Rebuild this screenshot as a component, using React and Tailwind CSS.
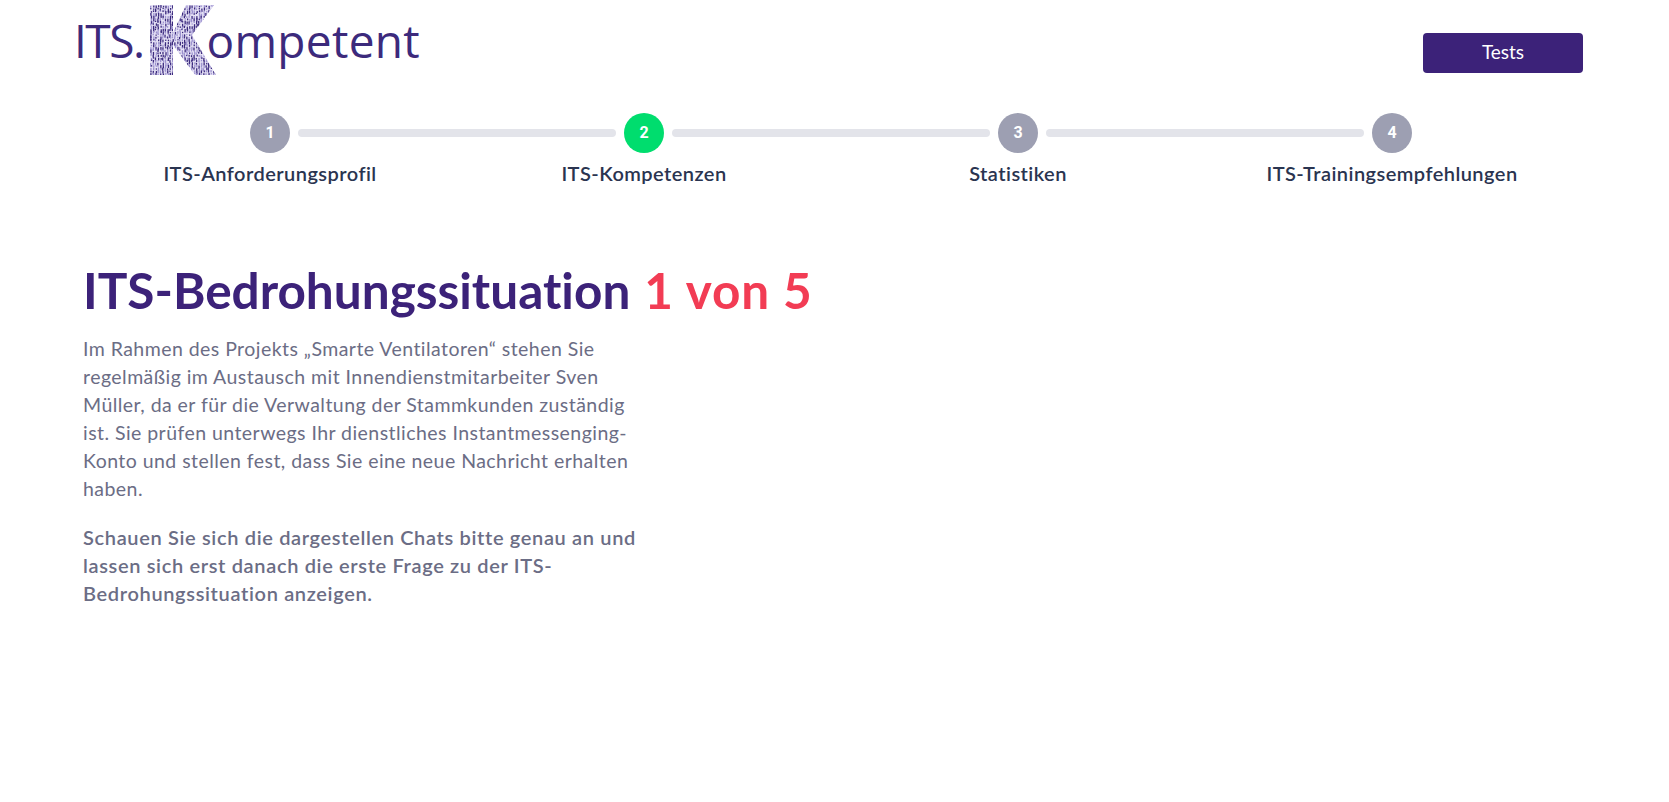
const STEPS = [
  { n: 1, label: "ITS-Anforderungsprofil" },
  { n: 2, label: "ITS-Kompetenzen", active: true },
  { n: 3, label: "Statistiken" },
  { n: 4, label: "ITS-Trainingsempfehlungen" },
];

// small dashes that make up the word-cloud K of the logo
const dots = [];
let seed = 7;
const rnd = () => {
  seed = (seed * 16807) % 2147483647;
  return seed / 2147483647;
};
for (let y = 0; y < 70; y += 2.6) {
  for (let x = 0; x < 68; x += 2.4) {
    dots.push({ x: x + rnd(), y: y + rnd(), h: 1.2 + rnd() * 2.4, dark: rnd() > 0.45 });
  }
}

function LogoK() {
  return (
    <svg width="66" height="70" viewBox="0 0 66 70" className="shrink-0">
      <defs>
        <clipPath id="k-shape">
          <path d="M0 0H23V28L36 0H64L42 30L66 70H45L23 40V70H0Z" />
        </clipPath>
      </defs>
      <g clipPath="url(#k-shape)">
        <rect width="66" height="70" fill="#e6e2f5" />
        {dots.map((d, i) => (
          <rect key={i} x={d.x} y={d.y} width="1.3" height={d.h} fill={d.dark ? "#3b2a7e" : "#9c92cf"} />
        ))}
      </g>
    </svg>
  );
}

function Logo() {
  return (
    <div className="flex items-start h-[70px] mt-[5px] ml-[74px] text-[#3c2a7c] text-[46px] leading-[70px] font-['Open_Sans',sans-serif]">
      <span className="tracking-[-1.5px] mr-[6px]">ITS.</span>
      <LogoK />
      <span className="-ml-[9px] tracking-[0.3px]">ompetent</span>
    </div>
  );
}

export default function App() {
  return (
    <div className="min-h-[802px] bg-white font-['Lato',sans-serif] [font-variant-ligatures:none]">
      {/* Header */}
      <div className="flex justify-between items-start pr-[86px]">
        <Logo />
        <button className="w-[160px] h-10 mt-[33px] pb-0.5 bg-[#3c2279] text-white text-[19px] rounded">Tests</button>
      </div>

      {/* Stepper */}
      <div className="flex items-center mt-[38px] ml-[250px] w-[1162px]">
        {STEPS.map((s) => (
          <div key={s.n} className="contents">
            <div className={`w-10 h-10 shrink-0 rounded-full flex items-center justify-center text-white text-base font-bold font-['Roboto',sans-serif] ${s.active ? "bg-[#00dd6e]" : "bg-[#9d9fb2]"}`}>
              {s.n}
            </div>
            {s.n < 4 && <div className="flex-1 h-2 mx-2 rounded-full bg-[#e3e4ea]" />}
          </div>
        ))}
      </div>
      <div className="grid grid-cols-4 w-[1496px] ml-[83px] mt-[6px]">
        {STEPS.map((s) => (
          <div key={s.n} className="text-center text-[20px] tracking-[0.45px] leading-7 font-semibold text-[#2a3450]">
            {s.label}
          </div>
        ))}
      </div>

      {/* Content */}
      <div className="ml-[83px] mt-[73px] w-[556px]">
        <h1 className="text-[49.5px] leading-[60px] font-bold text-[#3c2279] whitespace-nowrap">
          ITS-Bedrohungssituation <span className="ml-[2px] text-[#f23c54] tracking-[0.9px]">1 von 5</span>
        </h1>
        <p className="mt-[15px] text-[19.5px] tracking-[0.45px] leading-7 text-[#6b6d85]">
          Im Rahmen des Projekts „Smarte Ventilatoren“ stehen Sie regelmäßig im Austausch mit Innendienstmitarbeiter Sven Müller, da er für die Verwaltung der Stammkunden zuständig ist. Sie prüfen unterwegs Ihr dienstliches Instantmessenging-Konto und stellen fest, dass Sie eine neue Nachricht erhalten haben.
        </p>
        <p className="mt-5 text-[20px] tracking-[0.65px] leading-7 font-semibold text-[#6b6d85]">
          Schauen Sie sich die dargestellen Chats bitte genau an und lassen sich erst danach die erste Frage zu der ITS-Bedrohungssituation anzeigen.
        </p>
      </div>
    </div>
  );
}
